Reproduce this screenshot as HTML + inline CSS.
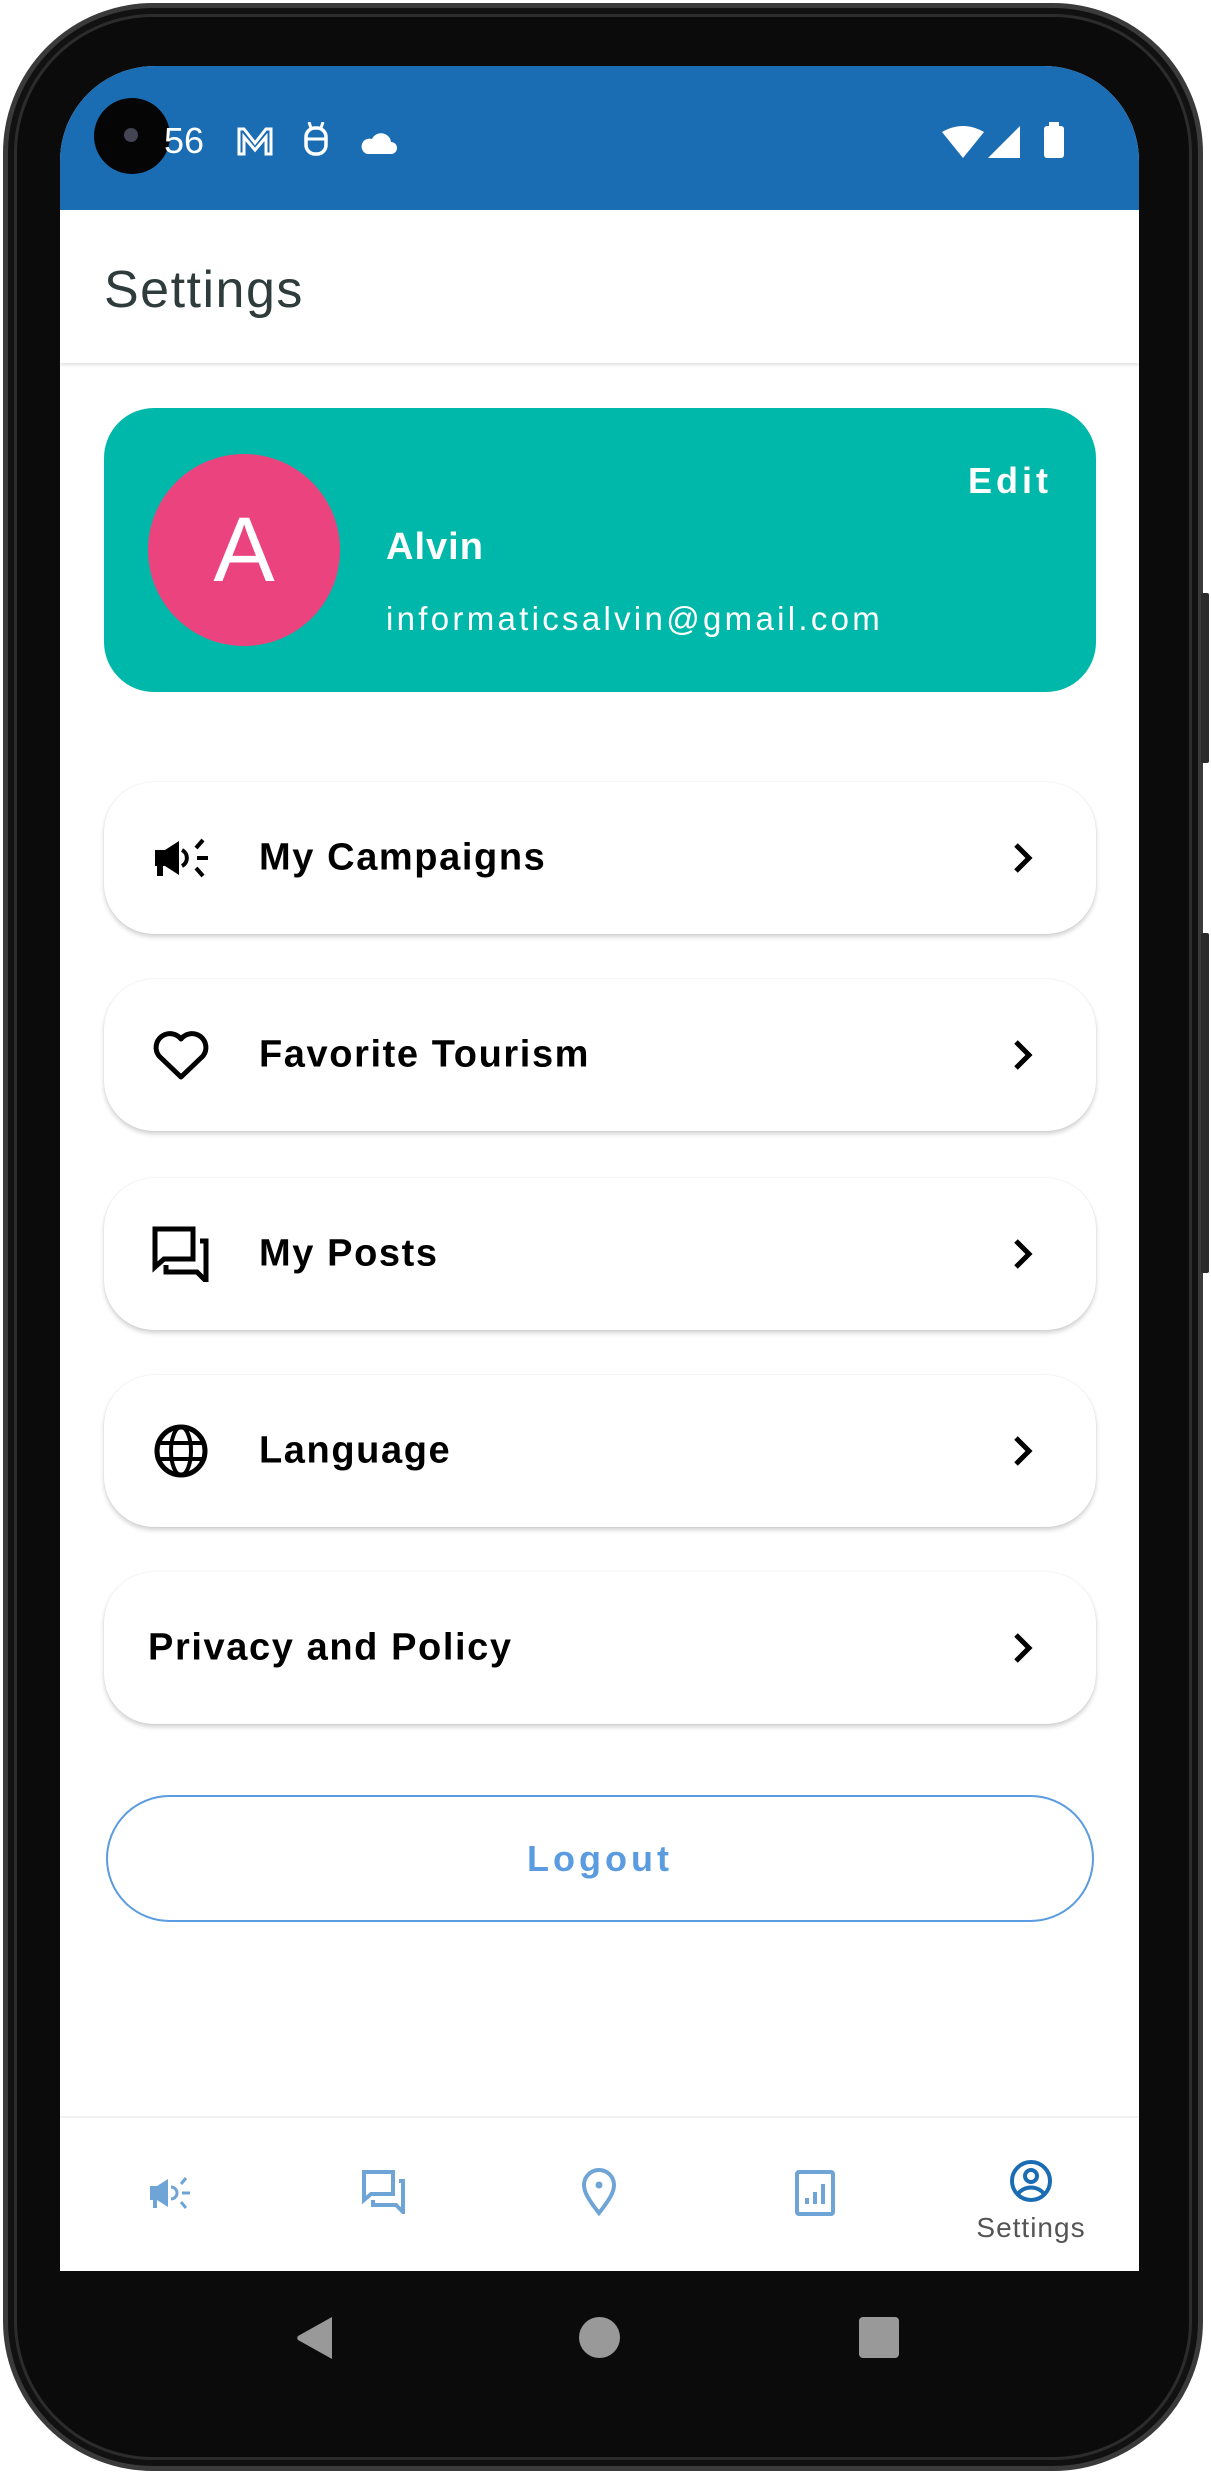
<!DOCTYPE html>
<html><head><meta charset="utf-8"><style>
*{margin:0;padding:0;box-sizing:border-box}
body{width:1211px;height:2474px;background:#fff;position:relative;overflow:hidden;font-family:"Liberation Sans",sans-serif}
.phone{position:absolute;left:3px;top:3px;width:1200px;height:2468px;background:#0b0b0b;border-radius:150px;border:5px solid #3a3a3a;box-shadow:inset 0 0 0 6px #111,inset 0 0 0 9px #2c2c2c}
.btn{position:absolute;left:1201px;width:8px;background:#2a2a2a;border-radius:2px}
.screen{position:absolute;left:60px;top:66px;width:1079px;height:2205px;background:#fff;border-radius:95px 95px 0 0;overflow:hidden}
.status{position:absolute;left:0;top:0;width:100%;height:144px;background:#1b6db3}
.abs{position:absolute}
.appbar{position:absolute;top:144px;left:0;width:100%;height:153px;background:#fff;box-shadow:0 2px 3px rgba(0,0,0,.12)}
.card{position:absolute;left:44px;width:992px;height:152px;background:#fff;border-radius:50px;box-shadow:0 3px 5px rgba(0,0,0,.18),0 0 1px rgba(0,0,0,.15)}
.card .t{position:absolute;left:155px;top:50%;transform:translateY(-50%);font-weight:bold;font-size:38px;letter-spacing:1.6px;color:#000}
.card svg.ic{position:absolute;left:48px;top:50%;transform:translateY(-50%)}
.card svg.ch{position:absolute;right:62px;top:50%;transform:translateY(-50%)}
</style></head><body>
<div class="phone"></div>
<div class="btn" style="top:593px;height:170px"></div>
<div class="btn" style="top:933px;height:340px"></div>
<div class="screen">
 <div class="status">
  <div class="abs" style="left:34px;top:32px;width:76px;height:76px;border-radius:50%;background:#050505"></div>
  <div class="abs" style="left:64px;top:62px;width:14px;height:14px;border-radius:50%;background:#445"></div>
  <div class="abs" style="left:104px;top:54px;color:#fff;font-size:36px">56</div>
  <svg class="abs" style="left:176px;top:60px" width="38" height="30" viewBox="0 0 38 30"><path d="M3 28V3h5l11 14L30 3h5v25h-5V11L19 24 8 11v17z" stroke="#fff" stroke-width="3" fill="none"/></svg>
  <svg class="abs" style="left:243px;top:56px" width="26" height="34" viewBox="0 0 26 34"><rect x="3" y="6" width="20" height="26" rx="9" fill="none" stroke="#fff" stroke-width="3.5"/><line x1="3" y1="17" x2="23" y2="17" stroke="#fff" stroke-width="3"/><line x1="6" y1="0" x2="8" y2="6" stroke="#fff" stroke-width="3"/><line x1="20" y1="0" x2="18" y2="6" stroke="#fff" stroke-width="3"/></svg>
  <svg class="abs" style="left:299px;top:62px" width="38" height="26" viewBox="0 0 38 26"><path d="M8 26h24a6 6 0 0 0 0-12 10 10 0 0 0-19-3 7 7 0 0 0-5 15z" fill="#fff"/></svg>
  <svg class="abs" style="left:882px;top:60px" width="42" height="32" viewBox="0 0 42 32"><path d="M0 6Q21-6 42 6L21 32z" fill="#fff"/></svg>
  <svg class="abs" style="left:928px;top:60px" width="32" height="32" viewBox="0 0 32 32"><path d="M32 0V32H0z" fill="#fff"/></svg>
  <div class="abs" style="left:984px;top:60px;width:20px;height:32px;background:#fff;border-radius:3px"></div>
  <div class="abs" style="left:989px;top:56px;width:10px;height:5px;background:#fff"></div>
 </div>
 <div class="appbar"><div class="abs" style="left:44px;top:50px;font-size:52px;letter-spacing:1.5px;color:#2e3c3c">Settings</div></div>

 <div class="abs" style="left:44px;top:342px;width:992px;height:284px;background:#00b8a9;border-radius:50px">
  <div class="abs" style="left:44px;top:46px;width:192px;height:192px;border-radius:50%;background:#eb437d;color:#fff;font-size:92px;text-align:center;line-height:192px">A</div>
  <div class="abs" style="left:282px;top:118px;color:#fff;font-weight:bold;font-size:38px;letter-spacing:1px">Alvin</div>
  <div class="abs" style="left:282px;top:192px;color:#fff;font-size:33px;letter-spacing:3.3px">informaticsalvin@gmail.com</div>
  <div class="abs" style="right:44px;top:52px;color:#fff;font-weight:bold;font-size:36px;letter-spacing:4px">Edit</div>
 </div>

 <div class="card" style="top:716px">
  <svg class="ic" width="58" height="44" viewBox="0 0 58 44"><path d="M3 14h10l14-9v34l-14-9h-2v10h-6V30H3z" fill="#000"/><path d="M30 14a9 9 0 0 1 0 16" stroke="#000" stroke-width="4" fill="none"/><path d="M44 12l7-8M44 32l7 8M45 22h11" stroke="#000" stroke-width="4"/></svg>
  <div class="t">My Campaigns</div>
  <svg class="ch" width="22" height="34" viewBox="0 0 22 34"><path d="M4 4l13 13L4 30" stroke="#000" stroke-width="5" fill="none"/></svg>
 </div>
 <div class="card" style="top:913px">
  <svg class="ic" width="58" height="52" viewBox="0 0 58 52"><path d="M29 48L7 27A13 13 0 0 1 29 10 13 13 0 0 1 51 27z" stroke="#000" stroke-width="5" fill="none" stroke-linejoin="round"/></svg>
  <div class="t">Favorite Tourism</div>
  <svg class="ch" width="22" height="34" viewBox="0 0 22 34"><path d="M4 4l13 13L4 30" stroke="#000" stroke-width="5" fill="none"/></svg>
 </div>
 <div class="card" style="top:1112px">
  <svg class="ic" width="58" height="56" viewBox="0 0 58 56"><path d="M3 3h38v30H12l-9 8z" stroke="#000" stroke-width="5" fill="none" stroke-linejoin="miter"/><path d="M48 15h6v40l-9-9H14v-7" stroke="#000" stroke-width="5" fill="none"/></svg>
  <div class="t">My Posts</div>
  <svg class="ch" width="22" height="34" viewBox="0 0 22 34"><path d="M4 4l13 13L4 30" stroke="#000" stroke-width="5" fill="none"/></svg>
 </div>
 <div class="card" style="top:1309px">
  <svg class="ic" width="58" height="56" viewBox="0 0 58 56"><circle cx="29" cy="28" r="24" stroke="#000" stroke-width="5" fill="none"/><ellipse cx="29" cy="28" rx="10" ry="24" stroke="#000" stroke-width="4" fill="none"/><path d="M5 20h48M5 36h48" stroke="#000" stroke-width="4"/></svg>
  <div class="t">Language</div>
  <svg class="ch" width="22" height="34" viewBox="0 0 22 34"><path d="M4 4l13 13L4 30" stroke="#000" stroke-width="5" fill="none"/></svg>
 </div>
 <div class="card" style="top:1506px">
  <div class="t" style="left:44px">Privacy and Policy</div>
  <svg class="ch" width="22" height="34" viewBox="0 0 22 34"><path d="M4 4l13 13L4 30" stroke="#000" stroke-width="5" fill="none"/></svg>
 </div>

 <div class="abs" style="left:46px;top:1729px;width:988px;height:127px;border:2px solid #5b9be0;border-radius:64px;color:#5b9be0;font-weight:bold;font-size:36px;letter-spacing:4px;text-align:center;line-height:123px">Logout</div>

 <div class="abs" style="left:0;top:2050px;width:100%;height:2px;background:#f2f2f2"></div>
 <svg class="abs" style="left:88px;top:2109px" width="44" height="36" viewBox="0 0 44 36"><path d="M2 11h7l11-7v28l-11-7H9v8H5V25H2z" fill="#6fa4d6"/><path d="M23 12a6 6 0 0 1 0 12" stroke="#6fa4d6" stroke-width="3" fill="none"/><path d="M33 9l5-6M33 27l5 6M34 18h8" stroke="#6fa4d6" stroke-width="3"/></svg>
 <svg class="abs" style="left:302px;top:2104px" width="44" height="44" viewBox="0 0 44 44"><path d="M2 2h29v22H9l-7 6z" stroke="#6fa4d6" stroke-width="4" fill="none"/><path d="M37 11h4v31l-7-7H11v-5" stroke="#6fa4d6" stroke-width="4" fill="none"/></svg>
 <svg class="abs" style="left:521px;top:2102px" width="36" height="48" viewBox="0 0 36 48"><path d="M18 45C6 30 3 23 3 17a15 15 0 0 1 30 0c0 6-3 13-15 28z" stroke="#6fa4d6" stroke-width="4" fill="none"/><circle cx="18" cy="17" r="3.5" fill="#6fa4d6"/></svg>
 <svg class="abs" style="left:735px;top:2104px" width="40" height="46" viewBox="0 0 40 46"><rect x="2" y="2" width="36" height="42" rx="2" stroke="#6fa4d6" stroke-width="4" fill="none"/><path d="M12 34v-6M20 34V22M28 34V14" stroke="#6fa4d6" stroke-width="4"/></svg>
 <svg class="abs" style="left:949px;top:2093px" width="44" height="44" viewBox="0 0 44 44"><circle cx="22" cy="22" r="19" stroke="#1b6db3" stroke-width="4" fill="none"/><circle cx="22" cy="17" r="6" stroke="#1b6db3" stroke-width="4" fill="none"/><path d="M9 35a15 13 0 0 1 26 0" stroke="#1b6db3" stroke-width="4" fill="none"/></svg>
 <div class="abs" style="left:906px;top:2146px;width:130px;text-align:center;color:#555;font-size:28px;letter-spacing:1px">Settings</div>
</div>
<svg class="abs" style="left:296px;top:2317px" width="40" height="42" viewBox="0 0 40 42"><path d="M36 0v42L2 23a3 3 0 0 1 0-4z" fill="#999"/></svg>
<div class="abs" style="left:579px;top:2317px;width:41px;height:41px;border-radius:50%;background:#999"></div>
<div class="abs" style="left:859px;top:2317px;width:40px;height:41px;border-radius:4px;background:#999"></div>
</body></html>
